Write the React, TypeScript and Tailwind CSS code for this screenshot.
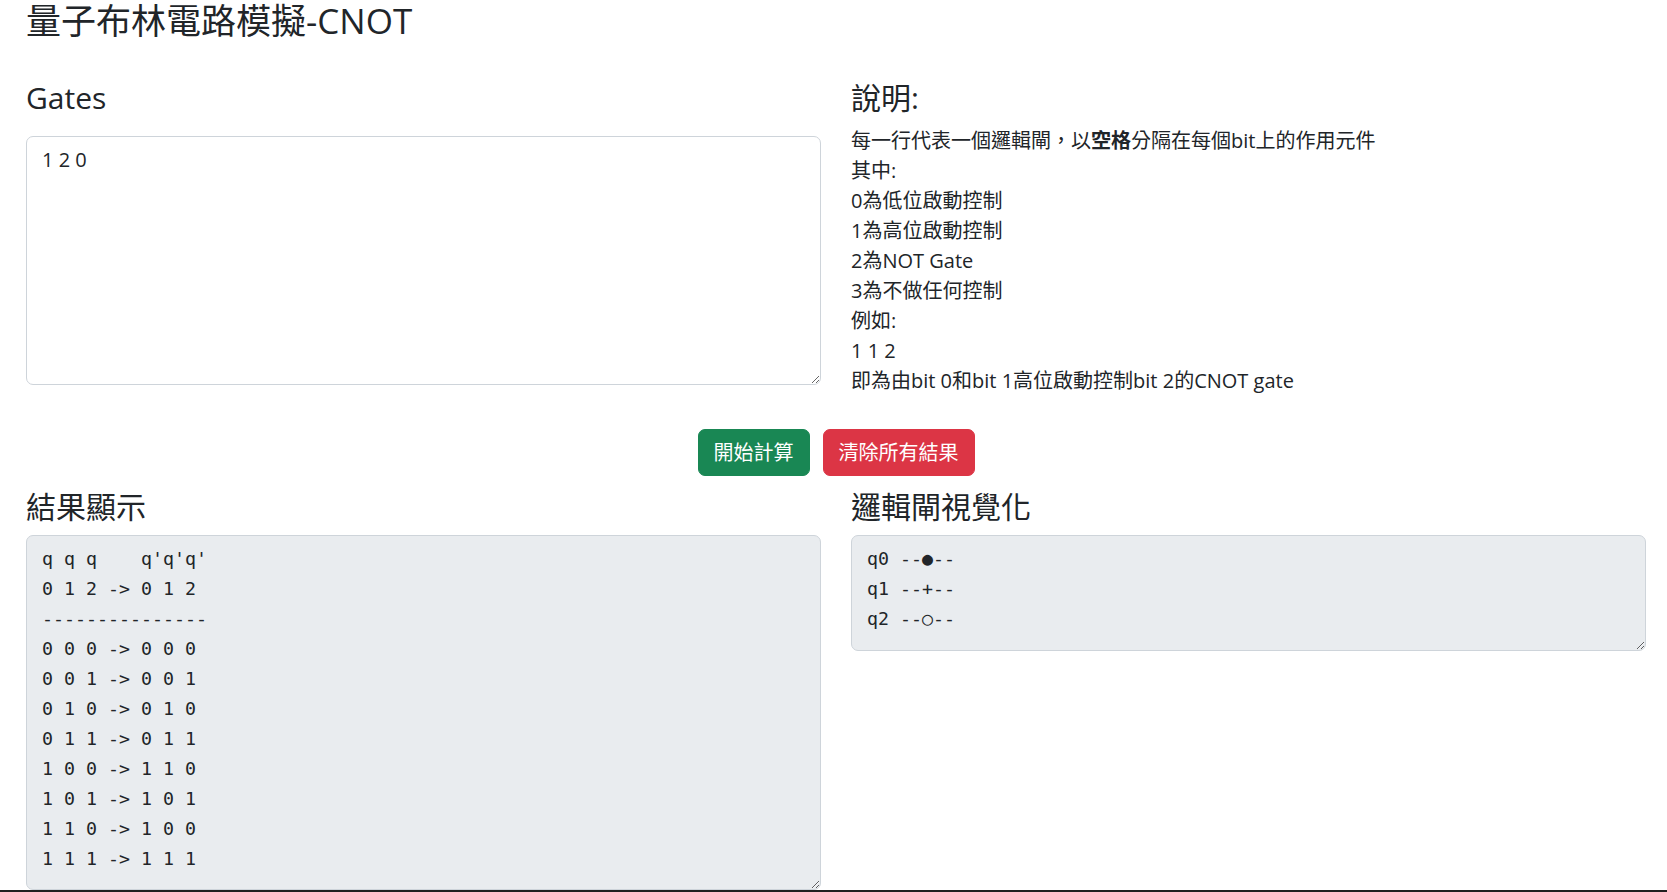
import { useState } from 'react';

const sans = 'font-["Open_Sans","Noto_Sans_CJK_TC",sans-serif]';

const resultLines = [
  "q q q    q'q'q'",
  '0 1 2 -> 0 1 2',
  '---------------',
  '0 0 0 -> 0 0 0',
  '0 0 1 -> 0 0 1',
  '0 1 0 -> 0 1 0',
  '0 1 1 -> 0 1 1',
  '1 0 0 -> 1 1 0',
  '1 0 1 -> 1 0 1',
  '1 1 0 -> 1 0 0',
  '1 1 1 -> 1 1 1',
];

const circuitLines = ['q0 --●--', 'q1 --+--', 'q2 --○--'];

export default function App() {
  const [gates, setGates] = useState('1 2 0');
  const [results, setResults] = useState(resultLines.join('\n'));
  const [circuit, setCircuit] = useState(circuitLines.join('\n'));

  const clearAll = () => {
    setResults('');
    setCircuit('');
  };

  return (
    <div className={`min-h-screen bg-white text-[#212529] ${sans}`}>
      <div className="pl-[26px] pr-[21px]">
        <h3 className="h-[42px] text-[35px] leading-[42px] font-normal">量子布林電路模擬-CNOT</h3>

        {/* input + description */}
        <div className="mt-[38px] grid grid-cols-2 gap-x-[30px]">
          <div>
            <h4 className="text-[30px] leading-[36px] font-normal">Gates</h4>
            <textarea
              value={gates}
              onChange={(e) => setGates(e.target.value)}
              className={`mt-[20px] block h-[249px] w-full rounded-[7px] border border-[#ced4da] bg-white px-[15px] py-[8px] text-[20px] leading-[30px] text-[#212529] outline-none ${sans}`}
            />
          </div>
          <div>
            <h4 className="text-[30px] leading-[36px] font-normal">說明:</h4>
            <div className="mt-[10px] text-[20px] leading-[30px]">
              <p>
                每一行代表一個邏輯閘，以<b className="font-bold">空格</b>分隔在每個bit上的作用元件
              </p>
              <p>其中:</p>
              <p>0為低位啟動控制</p>
              <p>1為高位啟動控制</p>
              <p>2為NOT Gate</p>
              <p>3為不做任何控制</p>
              <p>例如:</p>
              <p>1 1 2</p>
              <p>即為由bit 0和bit 1高位啟動控制bit 2的CNOT gate</p>
            </div>
          </div>
        </div>

        {/* actions */}
        <div className="mt-[33px] flex justify-center gap-[13px]">
          <button className="h-[47px] rounded-[7px] border border-[#198754] bg-[#198754] px-[15px] text-[20px] leading-[30px] text-white">
            開始計算
          </button>
          <button
            onClick={clearAll}
            className="h-[47px] rounded-[7px] border border-[#dc3545] bg-[#dc3545] px-[15px] text-[20px] leading-[30px] text-white"
          >
            清除所有結果
          </button>
        </div>

        {/* output */}
        <div className="mt-[13px] grid grid-cols-2 gap-x-[30px]">
          <div>
            <h4 className="text-[30px] leading-[36px] font-normal">結果顯示</h4>
            <textarea
              readOnly
              value={results}
              className='mt-[10px] block h-[355px] w-full rounded-[7px] border border-[#ced4da] bg-[#e9ecef] px-[15px] py-[8px] font-["DejaVu_Sans_Mono",monospace] text-[18.3px] leading-[30px] text-[#212529] outline-none'
            />
          </div>
          <div>
            <h4 className="text-[30px] leading-[36px] font-normal">邏輯閘視覺化</h4>
            <textarea
              readOnly
              value={circuit}
              className='mt-[10px] block h-[116px] w-full rounded-[7px] border border-[#ced4da] bg-[#e9ecef] px-[15px] py-[8px] font-["DejaVu_Sans_Mono",monospace] text-[18.3px] leading-[30px] text-[#212529] outline-none'
            />
          </div>
        </div>
      </div>
      <div className="h-[2px] bg-[#1f1f1f]" />
    </div>
  );
}
